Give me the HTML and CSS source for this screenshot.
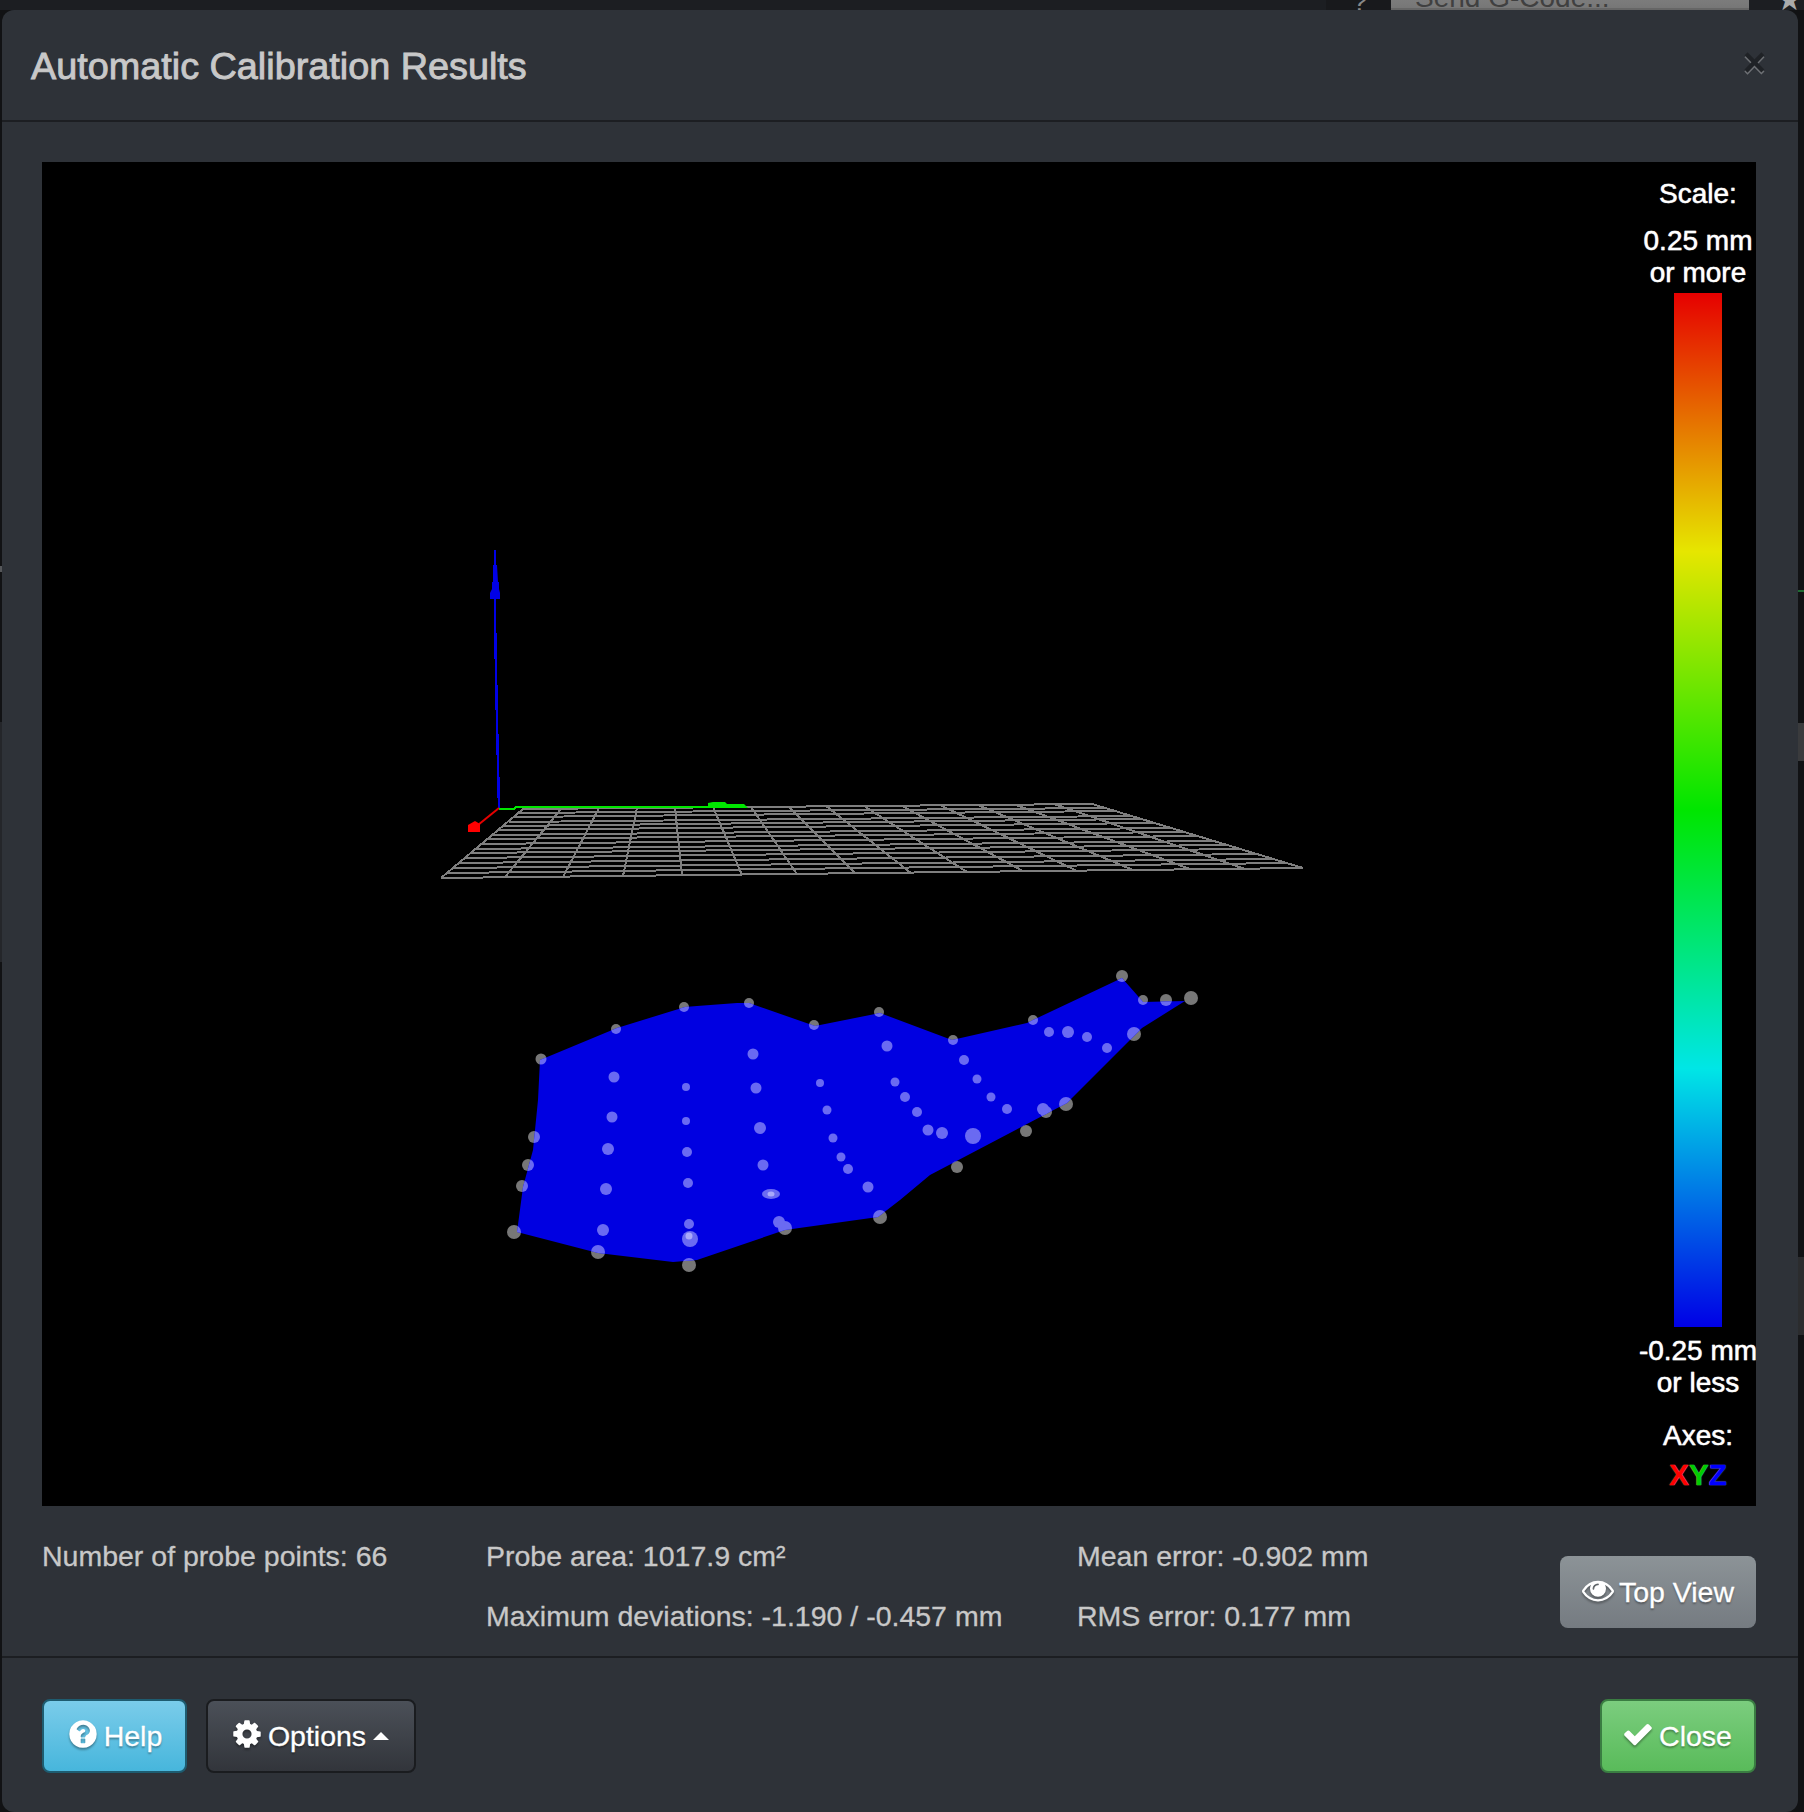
FILE: index.html
```html
<!DOCTYPE html>
<html lang="en">
<head>
<meta charset="utf-8">
<title>Automatic Calibration Results</title>
<link rel="stylesheet" href="styles.css">
</head>
<body>
<div class="backdrop">
  <div class="topbar">
    <span class="topbar-cell cell-b"><span class="topbar-help">?</span></span>
    <span class="send-btn">Send G-Code...</span>
    <span class="topbar-star">★</span>
  </div>
  <span class="gutter-bit bit-green"></span>
  <span class="gutter-bit bit-grey-a"></span>
  <span class="gutter-bit bit-grey-b"></span>
  <span class="gutter-bit bit-grey-c"></span>
  <span class="gutter-bit bit-grey-d"></span>
</div>
<div class="modal">
  <header class="modal-header">
    <h3 class="modal-title">Automatic Calibration Results</h3>
    <span class="close-x">×</span>
  </header>
  <main class="modal-body">
    <section class="viewer">
      <svg class="scene" viewBox="42 162 1598 1344" aria-hidden="true">
        <defs>
          <g id="pts">
            <circle cx="541" cy="1059" r="5.5"/><circle cx="616" cy="1029" r="5"/><circle cx="684" cy="1007" r="5"/><circle cx="749" cy="1003" r="5"/><circle cx="814" cy="1025" r="5"/><circle cx="879" cy="1012" r="5"/>
            <circle cx="953" cy="1040" r="5"/><circle cx="1033" cy="1020" r="5"/><circle cx="1122" cy="976" r="6"/><circle cx="1143" cy="1000" r="5"/><circle cx="1166" cy="1000" r="6"/><circle cx="1191" cy="998" r="7"/>
            <circle cx="1134" cy="1034" r="7"/><circle cx="1066" cy="1104" r="7"/><circle cx="1046" cy="1112" r="6"/><circle cx="1026" cy="1131" r="6"/><circle cx="957" cy="1167" r="6"/>
            <circle cx="880" cy="1217" r="7"/><circle cx="785" cy="1228" r="7"/><circle cx="689" cy="1265" r="7"/><circle cx="598" cy="1252" r="7"/><circle cx="514" cy="1232" r="7"/><circle cx="522" cy="1186" r="6"/><circle cx="528" cy="1165" r="6"/><circle cx="534" cy="1137" r="6"/>
            <circle cx="614" cy="1077" r="5.5"/><circle cx="612" cy="1117" r="5.5"/><circle cx="608" cy="1149" r="6"/><circle cx="606" cy="1189" r="6"/><circle cx="603" cy="1230" r="6"/>
            <circle cx="686" cy="1087" r="4"/><circle cx="686" cy="1121" r="4"/><circle cx="687" cy="1152" r="5"/><circle cx="688" cy="1183" r="5"/><circle cx="689" cy="1224" r="5"/><circle cx="690" cy="1239" r="8"/>
            <circle cx="753" cy="1054" r="5.5"/><circle cx="756" cy="1088" r="5.5"/><circle cx="760" cy="1128" r="6"/><circle cx="763" cy="1165" r="5.5"/><ellipse cx="771" cy="1194" rx="9" ry="5"/>
            <circle cx="820" cy="1083" r="4"/><circle cx="827" cy="1110" r="4.500"/><circle cx="833" cy="1138" r="4.500"/><circle cx="841" cy="1157" r="4.500"/><circle cx="848" cy="1169" r="5"/><circle cx="868" cy="1187" r="5.5"/>
            <circle cx="779" cy="1222" r="6"/><circle cx="887" cy="1046" r="5.5"/><circle cx="964" cy="1060" r="5"/><circle cx="895" cy="1082" r="4.500"/><circle cx="905" cy="1097" r="5"/><circle cx="917" cy="1112" r="5"/>
            <circle cx="977" cy="1079" r="4.500"/><circle cx="991" cy="1097" r="4.500"/><circle cx="928" cy="1130" r="5.5"/><circle cx="942" cy="1133" r="6"/><circle cx="973" cy="1136" r="8"/><circle cx="1007" cy="1109" r="5"/><circle cx="1043" cy="1109" r="6"/>
            <circle cx="1049" cy="1032" r="5"/><circle cx="1068" cy="1032" r="6"/><circle cx="1087" cy="1037" r="5"/><circle cx="1107" cy="1048" r="5"/>
          </g>
          <clipPath id="mesh-clip">
            <polygon points="540,1060 617,1028 685,1007 697,1006 737,1003 749,1003 815,1026 880,1013 952,1040 1027,1023 1033,1020 1122,978 1137,995 1143,1002 1185,1001 1142,1028 1093,1077 1067,1103 930,1175 900,1200 878,1217 785,1230 697,1260 673,1262 598,1253 517,1232 523,1187 533,1150 538,1100"/>
          </clipPath>
        </defs>
        <path class="grid" d="M523 809L1092 804M518 813L1104 808M514 817L1116 811M509 822L1130 816M504 826L1143 819M499 830L1155 823M493 835L1170 828M488 839L1184 832M482 844L1198 836M476 849L1213 841M471 853L1227 845M465 858L1242 849M459 863L1257 854M453 868L1272 859M447 873L1288 863M441 878L1303 868"/>
        <path class="grid" d="M523 809L441 878M561 809L505 877M599 808L563 877M637 808L623 876M675 808L682 875M713 807L742 875M751 807L797 874M789 807L855 873M826 806L911 873M864 806L967 872M902 806L1023 871M940 805L1077 871M978 805L1133 870M1016 805L1190 869M1054 804L1245 869M1092 804L1303 868"/>
        <path class="axis-z" d="M495 550V620L497 722L499 808"/>
        <path class="fill-z" d="M493 565H497L498 582H499V589L500 593L500 599H490V593L492 589V582H493Z"/>
        <path class="axis-x" d="M499 808L478 825"/>
        <path class="fill-x" d="M468 825L475 821L480 824V832L476 832H468Z"/>
        <path class="axis-y" d="M499 809H514L516 807H710"/>
        <path class="fill-y" d="M708 807V803L713 802H725L727 804H744L748 808H708Z"/>
        <use href="#pts" class="pts-under"/>
        <polygon class="mesh" points="540,1060 617,1028 685,1007 697,1006 737,1003 749,1003 815,1026 880,1013 952,1040 1027,1023 1033,1020 1122,978 1137,995 1143,1002 1185,1001 1142,1028 1093,1077 1067,1103 930,1175 900,1200 878,1217 785,1230 697,1260 673,1262 598,1253 517,1232 523,1187 533,1150 538,1100"/>
        <g clip-path="url(#mesh-clip)"><use href="#pts" class="pts-over"/></g>
        <circle class="pts-hi" cx="689" cy="1236" r="3.500"/>
        <ellipse class="pts-hi" cx="771" cy="1194" rx="3.500" ry="2.500"/>
      </svg>
      <aside class="legend">
        <div class="legend-title">Scale:</div>
        <div class="legend-limit legend-top">0.25 mm<br>or more</div>
        <div class="scale-bar"></div>
        <div class="legend-limit legend-bottom">-0.25 mm<br>or less</div>
        <div class="legend-title legend-axes">Axes:</div>
        <div class="axes-key"><span class="key-x">X</span><span class="key-y">Y</span><span class="key-z">Z</span></div>
      </aside>
    </section>
    <section class="stats">
      <div class="stat-col col-a"><p>Number of probe points: 66</p></div>
      <div class="stat-col col-b"><p>Probe area: 1017.9 cm²</p><p>Maximum deviations: -1.190 / -0.457 mm</p></div>
      <div class="stat-col col-c"><p>Mean error: -0.902 mm</p><p>RMS error: 0.177 mm</p></div>
      <button class="btn btn-grey top-view" type="button">
        <svg class="icon" viewBox="0 0 1792 1792"><path d="M1664 960q-152-236-381-353 61 104 61 225 0 185-131.500 316.500t-316.500 131.500-316.500-131.500-131.500-316.500q0-121 61-225-229 117-381 353 133 205 333.500 326.500t434.500 121.500 434.500-121.500 333.500-326.500zm-720-384q0-20-14-34t-34-14q-125 0-214.500 89.500t-89.500 214.500q0 20 14 34t34 14 34-14 14-34q0-86 61-147t147-61q20 0 34-14t14-34zm848 384q0 34-20 69-140 230-376.500 368.500t-499.500 138.500-499.500-139-376.500-368q-20-35-20-69t20-69q140-229 376.500-368t499.500-139 499.500 139 376.500 368q20 35 20 69z"/></svg>
        Top View
      </button>
    </section>
  </main>
  <footer class="modal-footer">
    <button class="btn btn-info" type="button">
      <svg class="icon" viewBox="0 0 1792 1792"><path d="M1024 1376v-192q0-14-9-23t-23-9h-192q-14 0-23 9t-9 23v192q0 14 9 23t23 9h192q14 0 23-9t9-23zm256-672q0-88-55.500-163t-138.500-116-170-41q-243 0-371 213-15 24 8 42l132 100q7 6 19 6 16 0 25-12 53-68 86-92 34-24 86-24 48 0 85.500 26t37.500 59q0 38-20 61t-68 45q-63 28-115.500 86.500t-52.500 125.500v36q0 14 9 23t23 9h192q14 0 23-9t9-23q0-19 21.500-49.500t54.500-49.500q32-18 49-28.500t46-35 44.500-48 28-60.500 12.500-81zm384 192q0 209-103 385.500t-279.500 279.500-385.500 103-385.500-103-279.500-279.500-103-385.500 103-385.500 279.500-279.500 385.500-103 385.500 103 279.500 279.500 103 385.500z"/></svg>
      Help
    </button>
    <button class="btn btn-dark" type="button">
      <svg class="icon" viewBox="0 0 1792 1792"><path d="M1152 896q0-106-75-181t-181-75-181 75-75 181 75 181 181 75 181-75 75-181zm512-109v222q0 12-8 23t-20 13l-185 28q-19 54-39 91 35 50 107 138 10 12 10 25t-9 23q-27 37-99 108t-94 71q-12 0-26-9l-138-108q-44 23-91 38-16 136-29 186-7 28-36 28h-222q-14 0-24.500-8.500t-11.500-21.500l-28-184q-49-16-90-37l-141 107q-10 9-25 9-14 0-25-11-126-114-165-168-7-10-7-23 0-12 8-23 15-21 51-66.500t54-70.500q-27-50-41-99l-183-27q-13-2-21-12.500t-8-23.500v-222q0-12 8-23t19-13l186-28q14-46 39-92-40-57-107-138-10-12-10-24 0-10 9-23 26-36 98.500-107.500t94.500-71.500q13 0 26 10l138 107q44-23 91-38 16-136 29-186 7-28 36-28h222q14 0 24.500 8.500t11.500 21.500l28 184q49 16 90 37l142-107q9-9 24-9 13 0 25 10 129 119 165 170 7 8 7 22 0 12-8 23-15 21-51 66.500t-54 70.500q26 50 41 98l183 28q13 2 21 12.500t8 23.500z"/></svg>
      Options
      <span class="caret-up"></span>
    </button>
    <span class="footer-gap"></span>
    <button class="btn btn-success" type="button">
      <svg class="icon" viewBox="0 0 1792 1792"><path d="M1671 566q0 40-28 68l-724 724-136 136q-28 28-68 28t-68-28l-136-136-362-362q-28-28-28-68t28-68l136-136q28-28 68-28t68 28l294 295 656-657q28-28 68-28t68 28l136 136q28 28 28 68z"/></svg>
      Close
    </button>
  </footer>
</div>
</body>
</html>
```
FILE: styles.css
```css
* { box-sizing: border-box; }
html, body { margin: 0; height: 100%; }
body {
  width: 1804px;
  height: 1812px;
  overflow: hidden;
  position: relative;
  background: #111214;
  font-family: "Liberation Sans", Arial, sans-serif;
  font-size: 28.5px;
  color: #c8c8c8;
}
.backdrop { position: absolute; inset: 0; overflow: hidden; }
.topbar { position: relative; height: 10px; overflow: hidden; background: #1c1e22; }
.topbar-cell { position: absolute; top: 0; height: 10px; background: #18191c; }
.cell-b { left: 1326px; width: 65px; }
.topbar-help { position: absolute; left: 26px; top: -14px; color: #888; font-size: 28px; line-height: 32px; }
.send-btn {
  position: absolute; left: 1391px; top: -27px; width: 358px; height: 37px;
  padding-left: 24px; background: linear-gradient(#8c8c8c, #777);
  border-bottom: 2px solid #666; color: #404040; font-size: 28px; line-height: 49px; overflow: hidden;
}
.topbar-star { position: absolute; left: 1776px; top: -17px; font-size: 30px; line-height: 34px; color: #aaa; }
.gutter-bit { position: absolute; }
.bit-green { left: 1798px; top: 590px; width: 6px; height: 2px; background: #1f6b33; }
.bit-grey-a { left: 1798px; top: 723px; width: 6px; height: 38px; background: #3a3b3d; }
.bit-grey-b { left: 1798px; top: 1257px; width: 6px; height: 78px; background: #2b2c2e; }
.bit-grey-c { left: 0; top: 566px; width: 2px; height: 6px; background: #55575a; }
.bit-grey-d { left: 0; top: 722px; width: 2px; height: 240px; background: #24262a; }
.modal {
  position: absolute; left: 2px; top: 10px; width: 1796px; height: 1802px;
  background: #2e3238; border-radius: 12px;
  display: flex; flex-direction: column; overflow: hidden;
}
.modal-header {
  height: 112px; flex: none; border-bottom: 2px solid #1c1e22;
  padding: 0 29px; display: flex; align-items: center; justify-content: space-between;
}
.modal-title { margin: 2px 0 0; font-size: 37.800px; font-weight: normal; -webkit-text-stroke: .9px #c8c8c8; line-height: 40px; color: #c8c8c8; }
.close-x {
  font-size: 40px; font-weight: bold; line-height: 40px; color: #000; opacity: .3;
  text-shadow: 0 2px 0 #fff; margin: 0 3px 6px 0;
}
.modal-body { flex: none; height: 1534px; padding: 40px 42px 0 40px; display: flex; flex-direction: column; }
.viewer { height: 1344px; background: #000; display: flex; flex: none; overflow: hidden; }
.scene { flex: 1; min-width: 0; height: 1344px; display: block; }
.grid { fill: none; stroke: #7f7f7f; stroke-width: 2; shape-rendering: crispEdges; }
.axis-z { fill: none; stroke: #0000e6; stroke-width: 2.500; shape-rendering: crispEdges; }
.fill-z { fill: #0000e6; }
.axis-x { fill: none; stroke: #e60000; stroke-width: 2; }
.fill-x { fill: #f00; }
.axis-y { fill: none; stroke: #00e600; stroke-width: 2.500; shape-rendering: crispEdges; }
.fill-y { fill: #00e600; }
.mesh { fill: #0000e1; }
.pts-under { fill: #777; }
.pts-over { fill: #6a6af2; }
.pts-hi { fill: #a9a9fa; }
.legend {
  width: 116px; flex: none; display: flex; flex-direction: column; align-items: center;
  color: #fff; font-size: 28px; line-height: 32px; text-align: center; white-space: nowrap;
  text-shadow: 0 0 1px rgba(255,255,255,.8); -webkit-text-stroke: .3px;
}
.legend-title { margin-top: 16px; }
.legend-top { margin-top: 15px; }
.scale-bar {
  width: 48px; height: 1034px; flex: none; margin-top: 4px;
  background: linear-gradient(to bottom, #e60000, #e6e600 25%, #00e600 50%, #00e6e6 75%, #0000e6);
}
.legend-bottom { margin-top: 7.500px; }
.legend-axes { margin-top: 21px; }
.axes-key { margin-top: 7px; font-weight: bold; font-size: 29.500px; line-height: 32px; }
.key-x { color: #f00; }
.key-y { color: #0c0; }
.key-z { color: #00f; }
.stats { display: flex; flex: 1; align-items: flex-start; padding-top: 34px; -webkit-text-stroke: .3px; }
.stat-col p { margin: 0 0 28px; line-height: 32px; }
.col-a { width: 444px; }
.col-b { width: 591px; }
.col-c { flex: 1; }
.btn {
  font: inherit; height: 74px; color: #fff; border: 2px solid transparent; border-radius: 8px;
  display: inline-flex; align-items: center; justify-content: center; gap: 5px; padding: 0;
  text-shadow: 0 2px 2px rgba(0,0,0,.35); -webkit-text-stroke: .3px;
}
.icon { width: 32px; height: 32px; fill: currentColor; flex: none; margin-top: -4px; filter: drop-shadow(0 2px 1px rgba(0,0,0,.35)); }
.top-view { width: 196px; height: 72px; margin-top: 16px; flex: none; border: 0; }
.btn-grey { background: linear-gradient(#8c9397, #757b81); }
.btn-info { width: 145px; background: linear-gradient(#7accea, #47b6dc); border-color: #1e5c70; }
.btn-dark { width: 210px; padding-right: 2px; background: linear-gradient(#4b5058, #32353b); border-color: #1a1c1f; }
.btn-success { width: 156px; padding-right: 2px; background: linear-gradient(#7bcd7e, #59bb5a); border-color: #3a7d42; }
.modal-footer { flex: 1; border-top: 2px solid #1c1e22; display: flex; align-items: flex-start; padding: 41px 42px 0 40px; gap: 19px; }
.footer-gap { flex: 1; }
.caret-up { width: 0; height: 0; border: 8px solid transparent; border-top: 0; border-bottom-color: #fff; margin-left: 2px; }
```
